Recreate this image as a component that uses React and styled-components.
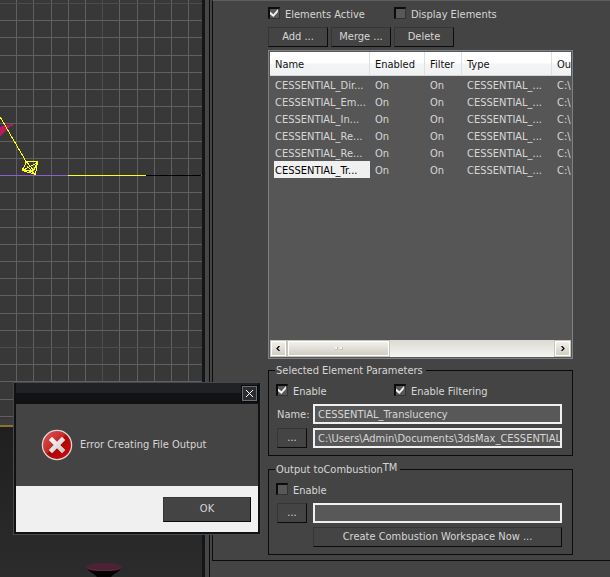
import React, { useState } from 'react'
import styled, { createGlobalStyle, css } from 'styled-components'

const columns = [
  { label: 'Name', width: 100 },
  { label: 'Enabled', width: 55 },
  { label: 'Filter', width: 37 },
  { label: 'Type', width: 90 },
  { label: 'Ou', width: 20 },
]

const elements = [
  'CESSENTIAL_Dir...',
  'CESSENTIAL_Em...',
  'CESSENTIAL_In...',
  'CESSENTIAL_Re...',
  'CESSENTIAL_Re...',
  'CESSENTIAL_Tr...',
]

const gridX = Array.from({ length: 11 }, (_, i) => Math.round(16.2 + i * 17.2))
const gridY = Array.from({ length: 25 }, (_, i) => Math.round(3 + i * 17.2))

function GridView() {
  return (
    <GridSvg aria-hidden="true" shapeRendering="crispEdges">
      {gridX.map((x, i) => (
        <rect key={x} x={x} y="0" width="1" height="100%" fill={i === 5 ? '#4c4c4c' : '#606060'} />
      ))}
      {gridY.map((y, i) => (
        <rect key={y} x="0" y={y} width="100%" height="1" fill={i % 20 === 0 ? '#4c4c4c' : '#606060'} />
      ))}
      <rect x="0" y="175" width="68" height="1" fill="#8a5fd0" />
      <rect x="68" y="175" width="78" height="1" fill="#ffff1e" />
      <rect x="146" y="175" width="55" height="1" fill="#000" />
      <path d="M0 126h3l2-1h5v-1h3v2h-2l-4 3-2 3-2 1-2 3H0z" fill="#b81a5a" />
      <path d="M0 125h4l-4 2z" fill="#3a1aa0" />
      <path
        d="M0.500 117.500L26 161.500M26.500 161.500H37.500L35.500 174.500L22.500 170.500L26.500 161.500L33.500 170.500H22.500L37.500 162.500M27.500 166.500L35.500 174.500M33.500 170.500L37.500 162.500M22.500 168.500L35.500 173.500"
        fill="none"
        stroke="#ffff1e"
      />
    </GridSvg>
  )
}

function CheckField({ label, defaultChecked }) {
  return (
    <CheckLabel>
      <CheckBox type="checkbox" defaultChecked={defaultChecked} />
      <span>{label}</span>
    </CheckLabel>
  )
}

function ErrorIcon() {
  return (
    <svg width="32" height="32" viewBox="0 0 32 32" aria-hidden="true">
      <defs>
        <linearGradient id="red" x1="0" y1="0" x2="1" y2="1">
          <stop offset="0" stopColor="#e05a5a" />
          <stop offset="0.45" stopColor="#c42a2a" />
          <stop offset="0.5" stopColor="#a80808" />
          <stop offset="1" stopColor="#d80808" />
        </linearGradient>
        <linearGradient id="cross" x1="0" y1="0" x2="1" y2="1">
          <stop offset="0" stopColor="#fff" />
          <stop offset="1" stopColor="#c4c4c4" />
        </linearGradient>
      </defs>
      <circle cx="16" cy="16" r="14.600" fill="url(#red)" stroke="#dcd6d2" strokeWidth="1.300" />
      <path
        d="M11 8l5 5 5-5 3 3-5 5 5 5-3 3-5-5-5 5-3-3 5-5-5-5z"
        fill="url(#cross)"
        stroke="#e8e8e8"
        strokeWidth="0.500"
        strokeLinejoin="round"
      />
    </svg>
  )
}

function ElementList() {
  const [selected, setSelected] = useState(5)

  return (
    <ListFrame>
      <ListView>
        <Table>
          <colgroup>
            {columns.map(column => (
              <col key={column.label} width={column.width} />
            ))}
          </colgroup>
          <thead>
            <tr>
              {columns.map(column => (
                <HeadCell key={column.label}>{column.label}</HeadCell>
              ))}
            </tr>
          </thead>
          <tbody>
            {elements.map((name, index) => (
              <tr key={index} onClick={() => setSelected(index)}>
                <Cell>
                  <NameText selected={selected === index}>{name}</NameText>
                </Cell>
                <Cell>On</Cell>
                <Cell>On</Cell>
                <Cell>CESSENTIAL_...</Cell>
                <Cell>C:\</Cell>
              </tr>
            ))}
          </tbody>
        </Table>
      </ListView>
      <ScrollBar>
        <ScrollButton aria-label="Scroll left">
          <svg width="5" height="5" viewBox="0 0 5 5" aria-hidden="true">
            <path d="M3.500 0L1 2.500L3.500 5" fill="none" stroke="#000" strokeWidth="1.200" />
          </svg>
        </ScrollButton>
        <ScrollThumb>
          <i />
          <i />
        </ScrollThumb>
        <ScrollTrack />
        <ScrollButton aria-label="Scroll right">
          <svg width="5" height="5" viewBox="0 0 5 5" aria-hidden="true">
            <path d="M1.500 0L4 2.500L1.500 5" fill="none" stroke="#000" strokeWidth="1.200" />
          </svg>
        </ScrollButton>
      </ScrollBar>
    </ListFrame>
  )
}

function ErrorDialog() {
  return (
    <Dialog role="alertdialog" aria-labelledby="message">
      <TitleBar>
        <CloseButton aria-label="Close">
          <svg width="7" height="7" viewBox="0 0 7 7" aria-hidden="true" shapeRendering="crispEdges">
            <path d="M0 0L7 7M7 0L0 7" stroke="#fff" strokeWidth="1.200" />
          </svg>
        </CloseButton>
      </TitleBar>
      <Message>
        <ErrorIcon />
        <p id="message">Error Creating File Output</p>
      </Message>
      <DialogFooter>
        <OkButton>OK</OkButton>
      </DialogFooter>
    </Dialog>
  )
}

function App() {
  return (
    <>
      <GlobalStyle />
      <Page>
        <Viewports>
          <GridView />
          <ViewportGap />
          <RenderView>
            <svg width="38" height="16" viewBox="0 0 38 16" aria-hidden="true">
              <path d="M1 6C3 11 9 12 12 16H26C29 12 35 11 37 6z" fill="#050304" />
              <ellipse cx="19" cy="6" rx="18" ry="4" fill="#4d2236" />
              <path d="M1 6C6 10 32 10 37 6C36 9 30 10 19 10S2 9 1 6z" fill="#632a3c" />
            </svg>
          </RenderView>
        </Viewports>
        <Splitter />
        <Panel>
          <Rollout>
            <CheckRow>
              <CheckField label="Elements Active" defaultChecked />
              <CheckField label="Display Elements" />
            </CheckRow>
            <ButtonRow>
              <Button>Add ...</Button>
              <Button>Merge ...</Button>
              <Button>Delete</Button>
            </ButtonRow>
            <ElementList />
            <Group>
              <legend>Selected Element Parameters</legend>
              <CheckRow indent>
                <CheckField label="Enable" defaultChecked />
                <CheckField label="Enable Filtering" defaultChecked />
              </CheckRow>
              <FieldRow>
                <label htmlFor="name">Name:</label>
                <TextInput id="name" defaultValue="CESSENTIAL_Translucency" />
              </FieldRow>
              <FieldRow>
                <BrowseButton aria-label="Browse output path">...</BrowseButton>
                <TextInput aria-label="Output path" defaultValue="C:\Users\Admin\Documents\3dsMax_CESSENTIAL_" />
              </FieldRow>
            </Group>
            <Group>
              <legend>
                Output toCombustion<sup>TM</sup>
              </legend>
              <CheckRow indent>
                <CheckField label="Enable" />
              </CheckRow>
              <FieldRow>
                <BrowseButton aria-label="Browse workspace path">...</BrowseButton>
                <TextInput aria-label="Workspace path" />
              </FieldRow>
              <FieldRow>
                <span />
                <WideButton>Create Combustion Workspace Now ...</WideButton>
              </FieldRow>
            </Group>
          </Rollout>
        </Panel>
        <ErrorDialog />
      </Page>
    </>
  )
}

const GlobalStyle = createGlobalStyle`
  * {
    box-sizing: border-box;
  }
  body {
    margin: 0;
    background: #444;
  }
  body, button, input {
    font: 11px/15px 'DejaVu Sans Condensed', Tahoma, sans-serif;
    color: #d6d6d6;
  }
`

const Page = styled.div`
  position: relative;
  display: flex;
  min-height: 100vh;
  overflow: hidden;
`

const Viewports = styled.div`
  flex: 0 0 202px;
  display: flex;
  flex-direction: column;
  background: #383838;
`

const GridSvg = styled.svg`
  display: block;
  width: 100%;
  height: 419px;
`

const ViewportGap = styled.div`
  height: 8px;
  border-bottom: 2px solid #8c742c;
  background: #3c3c3c;
`

const RenderView = styled.div`
  flex: 1;
  display: flex;
  align-items: flex-end;
  padding-left: 85px;
  background: linear-gradient(#1f1f1f, #2c2c2c);
`

const Splitter = styled.div`
  flex: 0 0 8px;
  border-left: 3px solid #141516;
  border-right: 1px solid #0c0c0c;
  background: #464646;
`

const Panel = styled.main`
  flex: 1;
  min-width: 0;
  padding-left: 2px;
`

const Rollout = styled.section`
  padding: 2px 37px 5px 55px;
  border-left: 1px solid #0c0c0c;
  border-top: 1px solid #5e5e5e;
  border-bottom: 1px solid #0c0c0c;
`

const CheckRow = styled.div`
  display: grid;
  grid-template-columns: ${props => (props.indent ? '118px' : '126px')} 1fr;
  align-items: center;
  height: 20px;
  margin-left: ${props => (props.indent ? '-1px' : '0')};
`

const CheckLabel = styled.label`
  display: flex;
  align-items: center;
  gap: 5px;

  span {
    padding-top: 2px;
  }
`

const CheckBox = styled.input`
  appearance: none;
  width: 12px;
  height: 12px;
  margin: 0;
  border: solid #0c0c0c;
  border-width: 2px 1px 1px 2px;
  border-right-color: #333;
  border-bottom-color: #333;
  background: #585858;

  &:checked::after {
    content: '';
    display: block;
    width: 9px;
    height: 8px;
    background: #f0f0f0;
    clip-path: polygon(0 30%, 38% 65%, 88% 0, 88% 38%, 38% 100%, 0 65%);
  }
`

const buttonFace = css`
  height: 20px;
  padding: 0 0 2px;
  border: 1px solid #363636;
  border-right-color: #0c0c0c;
  border-bottom-color: #0c0c0c;
  background: #444;
`

const ButtonRow = styled.div`
  display: flex;
  gap: 3px;
  margin: 4px 0 3px;
`

const Button = styled.button`
  ${buttonFace}
  width: 60px;
`

const BrowseButton = styled.button`
  ${buttonFace}
  width: 30px;
`

const WideButton = styled.button`
  ${buttonFace}
  width: 100%;
`

const OkButton = styled.button`
  ${buttonFace}
  width: 88px;
  height: 25px;
`

const ListFrame = styled.div`
  padding: 1px;
  border: 1px solid #7d828a;
  background: #565656;
`

const ListView = styled.div`
  height: 288px;
  overflow: hidden;
`

const Table = styled.table`
  width: 100%;
  table-layout: fixed;
  border-collapse: separate;
  border-spacing: 0;
`

const HeadCell = styled.th`
  height: 24px;
  padding: 2px 0 0 5px;
  border-right: 1px solid #dfe0e2;
  border-bottom: 1px solid #d5d5d5;
  background: linear-gradient(#fff 45%, #f3f4f6 55%, #f0f1f3);
  color: #111;
  font-weight: normal;
  text-align: left;

  &:last-child {
    border-right: 0;
    padding-right: 0;
  }
`

const Cell = styled.td`
  height: 17px;
  padding: 2px 0 0 5px;
  white-space: nowrap;
  overflow: hidden;

  &:first-child {
    padding: 0 0 0 4px;
  }
`

const NameText = styled.div`
  padding: 2px 0 0 1px;
  ${props =>
    props.selected &&
    css`
      background: #f0f0f0;
      color: #000;
    `}
`

const ScrollBar = styled.div`
  display: flex;
  height: 17px;
  background: linear-gradient(#dcdad4, #f6f5f2);
`

const scrollFace = css`
  border: 1px solid #c9c4b8;
  box-shadow: inset 0 0 0 1px #fff;
  background: linear-gradient(#f4f3ef, #cfcbc1);
`

const ScrollButton = styled.button`
  ${scrollFace}
  display: grid;
  place-items: center;
  width: 17px;
  padding: 0;
`

const ScrollThumb = styled.div`
  ${scrollFace}
  display: flex;
  align-items: center;
  justify-content: center;
  gap: 2px;
  width: 103px;

  i {
    width: 3px;
    height: 3px;
    border: solid #c4c0b6;
    border-width: 0 1px 1px 0;
    background: #f8f7f4;
  }
`

const ScrollTrack = styled.div`
  flex: 1;
`

const Group = styled.fieldset`
  display: grid;
  gap: 4px;
  min-width: 0;
  margin: 4px 0 0;
  padding: 2px 10px 7px 8px;
  border: 1px solid #0c0c0c;

  & + & {
    margin-top: 6px;
  }

  legend {
    height: 15px;
    margin-left: -2px;
    padding: 0 3px 0 1px;
    white-space: nowrap;
  }

  sup {
    font-size: 11px;
    line-height: 0;
    vertical-align: 2px;
  }
`

const FieldRow = styled.div`
  display: grid;
  grid-template-columns: 30px 1fr;
  gap: 6px;
  align-items: center;
`

const TextInput = styled.input`
  width: 100%;
  min-width: 0;
  height: 20px;
  padding: 0 0 0 3px;
  border: 2px solid #f0f0f2;
  background: #585858;
`

const Dialog = styled.div`
  position: absolute;
  left: 13px;
  top: 382px;
  width: 248px;
  padding: 0 2px 2px;
  border: 1px solid #444950;
  background: #101113;
`

const TitleBar = styled.div`
  display: flex;
  justify-content: flex-end;
  align-items: center;
  height: 21px;
  background: linear-gradient(#202226 50%, #111214 50%);
`

const CloseButton = styled.button`
  display: grid;
  place-items: center;
  width: 15px;
  height: 15px;
  margin-right: 1px;
  padding: 0;
  border: 1px solid #6a6d74;
  outline: 1px solid #08090a;
  background: #2a2c30;
`

const Message = styled.div`
  display: flex;
  align-items: center;
  gap: 7px;
  height: 82px;
  padding-left: 25px;
  background: #444;

  p {
    margin: 0;
    padding-bottom: 2px;
  }
`

const DialogFooter = styled.div`
  display: flex;
  justify-content: flex-end;
  align-items: center;
  height: 46px;
  padding-right: 7px;
  background: #f0f0f0;
`

export default App
